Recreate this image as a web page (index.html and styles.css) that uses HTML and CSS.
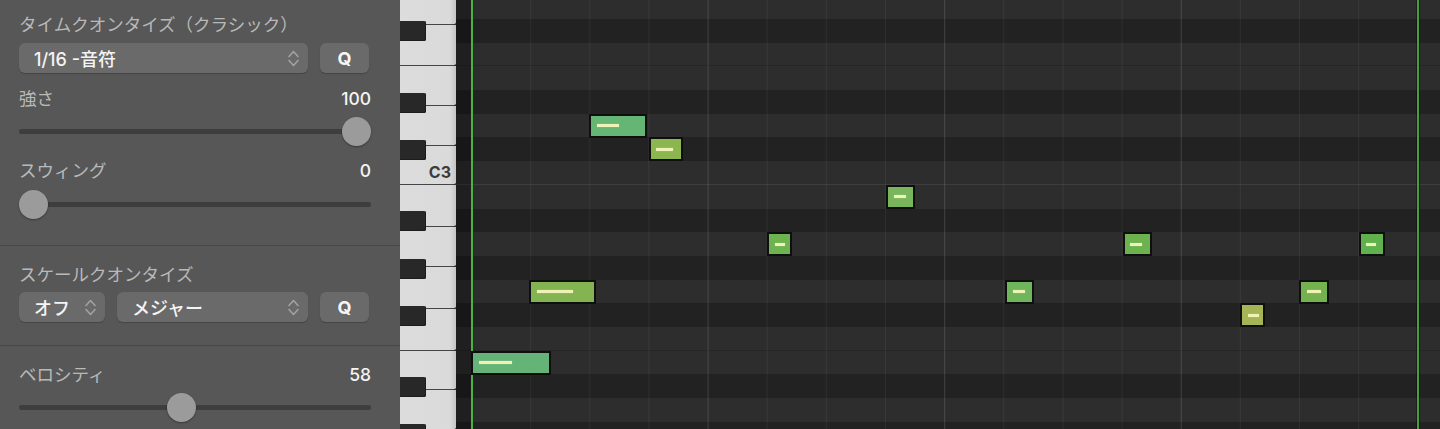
FILE: index.html
```html
<!DOCTYPE html>
<html lang="ja">
<head>
<meta charset="utf-8">
<title>Piano Roll</title>
<link rel="stylesheet" href="styles.css">
</head>
<body>
<div class="app">
  <aside class="panel">
    <section class="sec sec-time">
      <div class="label">タイムクオンタイズ（クラシック）</div>
      <div class="ctrl-row">
        <div class="popup popup-grow"><span>1/16 -音符</span>
          <svg class="chev" viewBox="0 0 11 17" width="11" height="17"><polyline points="1,6.5 5.5,1.5 10,6.5"/><polyline points="1,10.5 5.5,15.5 10,10.5"/></svg>
        </div>
        <div class="qbtn">Q</div>
      </div>
      <div class="param p-strength"><span class="label">強さ</span><span class="value">100</span></div>
      <div class="slider s-first"><div class="track"></div><div class="knob" style="left: calc((100% - 29px) * 1)"></div></div>
      <div class="param p-swing"><span class="label">スウィング</span><span class="value">0</span></div>
      <div class="slider s-second"><div class="track"></div><div class="knob" style="left: calc((100% - 29px) * 0)"></div></div>
    </section>
    <div class="divider"></div>
    <section class="sec sec-scale">
      <div class="label">スケールクオンタイズ</div>
      <div class="ctrl-row">
        <div class="popup popup-off"><span>オフ</span>
          <svg class="chev" viewBox="0 0 11 17" width="11" height="17"><polyline points="1,6.5 5.5,1.5 10,6.5"/><polyline points="1,10.5 5.5,15.5 10,10.5"/></svg>
        </div>
        <div class="popup popup-grow"><span>メジャー</span>
          <svg class="chev" viewBox="0 0 11 17" width="11" height="17"><polyline points="1,6.5 5.5,1.5 10,6.5"/><polyline points="1,10.5 5.5,15.5 10,10.5"/></svg>
        </div>
        <div class="qbtn">Q</div>
      </div>
    </section>
    <div class="divider"></div>
    <section class="sec sec-vel">
      <div class="param"><span class="label">ベロシティ</span><span class="value">58</span></div>
      <div class="slider s-vel"><div class="track"></div><div class="knob" style="left: calc((100% - 29px) * 0.4567)"></div></div>
    </section>
  </aside>

  <div class="piano">
    <div class="whites">
      <div class="wk k-g"></div>
      <div class="wk k-f"></div>
      <div class="wk k-e"></div>
      <div class="wk k-d"></div>
      <div class="wk k-c"><span class="klabel">C3</span></div>
      <div class="wk k-b"></div>
      <div class="wk k-a"></div>
      <div class="wk k-g"></div>
      <div class="wk k-f"></div>
      <div class="wk k-e"></div>
      <div class="wk k-d"></div>
      <div class="wk k-c"></div>
    </div>
    <div class="bk" style="top: 21px"></div>
    <div class="bk" style="top: 92.6px"></div>
    <div class="bk" style="top: 140px"></div>
    <div class="bk" style="top: 211px"></div>
    <div class="bk" style="top: 258.5px"></div>
    <div class="bk" style="top: 306px"></div>
    <div class="bk" style="top: 377px"></div>
    <div class="bk" style="top: 424.4px"></div>
  </div>

  <div class="grid">
    <div class="rows">
      <div class="r l"></div>
      <div class="r d"></div>
      <div class="r l f"></div>
      <div class="r l"></div>
      <div class="r d"></div>
      <div class="r l"></div>
      <div class="r d"></div>
      <div class="r l c"></div>
      <div class="r l"></div>
      <div class="r d"></div>
      <div class="r l"></div>
      <div class="r d"></div>
      <div class="r l"></div>
      <div class="r d"></div>
      <div class="r l f"></div>
      <div class="r l"></div>
      <div class="r d"></div>
      <div class="r l"></div>
      <div class="r d"></div>
    </div>
    <div class="vlines"></div>
    <div class="prestart"></div>
    <div class="marker m-start"></div>
    <div class="marker m-end"></div>

    <div class="note" style="left:133px; top:113.5px; width:57.5px; background:#65b574"><i style="width:22px"></i></div>
    <div class="note" style="left:192.5px; top:137.3px; width:34.5px; background:#8cb650"><i style="width:17px"></i></div>
    <div class="note" style="left:430px; top:184.8px; width:29px; background:#78b55c"><i style="width:12px"></i></div>
    <div class="note" style="left:311px; top:232.2px; width:25px; background:#6db350"><i style="width:10px"></i></div>
    <div class="note" style="left:666.5px; top:232.2px; width:29.5px; background:#6cb24f"><i style="width:12px"></i></div>
    <div class="note" style="left:902.5px; top:232.2px; width:26px; background:#5eb14c"><i style="width:10px"></i></div>
    <div class="note" style="left:73px; top:279.6px; width:67px; background:#84b452"><i style="width:36px"></i></div>
    <div class="note" style="left:549px; top:279.6px; width:29px; background:#6eb55b"><i style="width:12px"></i></div>
    <div class="note" style="left:843px; top:279.6px; width:30px; background:#74b24f"><i style="width:14px"></i></div>
    <div class="note" style="left:784px; top:303.3px; width:24.5px; background:#a5b455"><i style="width:11px"></i></div>
    <div class="note" style="left:15px; top:350.7px; width:80px; background:#66b378"><i style="width:33px"></i></div>
  </div>
</div>
</body>
</html>
```

FILE: styles.css
```css
* { box-sizing: border-box; }
html, body {
  margin: 0;
  padding: 0;
  width: 1440px;
  height: 429px;
  overflow: hidden;
  background: #575757;
}
.app {
  display: flex;
  height: 429px;
  font-family: "Inter", "Noto Sans CJK JP", sans-serif;
}

/* ---------- left panel ---------- */
.panel {
  width: 400px;
  flex: none;
  background: #575757;
  display: flex;
  flex-direction: column;
}
.sec {
  padding: 0 29px 0 19px;
  display: flex;
  flex-direction: column;
}
.sec-time { padding-top: 15px; height: 245px; }
.sec-scale { padding-top: 19px; height: 99px; }
.sec-vel { padding-top: 19px; flex: 1; }
.divider { height: 1px; background: #474747; flex: none; }

.label {
  color: #b9b9b9;
  font-size: 17.5px;
  line-height: 20px;
  height: 20px;
  white-space: nowrap;
}
.ctrl-row {
  display: flex;
  gap: 12px;
  margin-top: 7px;
  padding-right: 2px;
  height: 30px;
}
.sec-time .ctrl-row { margin-top: 8px; }
.popup {
  height: 30px;
  border-radius: 6px;
  background: #6a6a6a;
  box-shadow: 0 1px 1px rgba(0,0,0,0.22);
  display: flex;
  align-items: center;
  justify-content: space-between;
  padding: 0 9px 0 15px;
  color: #f4f4f4;
  font-size: 18px;
  font-weight: 500;
}
.popup-grow { flex: 1; }
.popup-off { width: 86px; flex: none; }
.chev {
  fill: none;
  stroke: #a2a2a2;
  stroke-width: 1.6;
  stroke-linecap: round;
  stroke-linejoin: round;
}
.qbtn {
  width: 49px;
  flex: none;
  height: 30px;
  border-radius: 6px;
  background: #6a6a6a;
  box-shadow: 0 1px 1px rgba(0,0,0,0.22);
  display: flex;
  align-items: center;
  justify-content: center;
  color: #f6f6f6;
  font-size: 18px;
  font-weight: 700;
}
.param {
  display: flex;
  justify-content: space-between;
  align-items: center;
  height: 20px;
}
.p-strength { margin-top: 16px; }
.p-swing { margin-top: 15px; }
.value {
  color: #f4f4f4;
  font-size: 17.5px;
  font-weight: 500;
  line-height: 20px;
}
.slider {
  position: relative;
  height: 29px;
  display: flex;
  align-items: center;
}
.s-first { margin-top: 8px; }
.s-second { margin-top: 9px; }
.s-vel { margin-top: 8px; }
.track {
  width: 100%;
  height: 5px;
  border-radius: 3px;
  background: #3e3e3e;
}
.knob {
  position: absolute;
  top: 0;
  width: 29px;
  height: 29px;
  border-radius: 50%;
  background: #9b9b9b;
  box-shadow: 0 1px 2px rgba(0,0,0,0.35);
}

/* ---------- piano ---------- */
.piano {
  width: 56px;
  flex: none;
  position: relative;
  overflow: hidden;
  background: #dadada;
}
.whites {
  display: flex;
  flex-direction: column;
  margin-top: -17.4px;
}
.wk {
  position: relative;
  flex: none;
  border-bottom: 1px solid #454545;
  background: linear-gradient(to right, #dcdcdc 0, #dadada 50px, #c4c4c4 56px);
  display: flex;
  align-items: flex-end;
  justify-content: flex-end;
}
.wk::after {
  content: "";
  position: absolute;
  right: 0;
  bottom: -3px;
  border-style: solid;
  border-width: 2.5px 3px 2.5px 0;
  border-color: transparent #333 transparent transparent;
}
.k-g { height: 42.5px; }
.k-f { height: 41.3px; }
.k-e { height: 39.5px; }
.k-d { height: 40px; }
.k-c { height: 39px; }
.k-b { height: 42px; }
.k-a { height: 40px; }
.klabel {
  font-family: "Inter", "Liberation Sans", sans-serif;
  font-weight: 700;
  font-size: 16px;
  line-height: 16px;
  color: #3b3b3b;
  padding: 0 5px 4px 0;
}
.bk {
  position: absolute;
  left: 0;
  width: 26px;
  height: 20px;
  background: #282828;
  border-radius: 0 2px 2px 0;
  box-shadow: inset -1px -1px 0 #1c1c1c;
}

/* ---------- grid ---------- */
.grid {
  flex: 1;
  position: relative;
  overflow: hidden;
  background: #222;
}
.rows {
  display: flex;
  flex-direction: column;
  margin-top: -4.7px;
}
.r { height: 23.69px; flex: none; }
.r.l { background: #2d2d2d; }
.r.d { background: #222222; }
.r.f { border-bottom: 1px solid #262626; }
.r.c { border-bottom: 1px solid #3d3d3d; }
.vlines {
  position: absolute;
  top: 0;
  bottom: 0;
  left: 15px;
  right: 0;
  background-image:
    linear-gradient(to right, rgba(255,255,255,0.085) 1px, transparent 1px),
    linear-gradient(to right, rgba(255,255,255,0.055) 1px, transparent 1px);
  background-size: 236.6px 100%, 59.15px 100%;
}
.prestart {
  position: absolute;
  top: 0;
  bottom: 0;
  left: 0;
  width: 15px;
  background: rgba(0,0,0,0.3);
}
.marker {
  position: absolute;
  top: 0;
  bottom: 0;
  width: 2px;
}
.m-start { left: 15px; background: #4cb244; }
.m-end { left: 961px; background: #43a03b; box-shadow: 0 0 0 1px rgba(0,0,0,0.35); }
.note {
  position: absolute;
  height: 24px;
  border: 2px solid #0f0f0f;
  display: flex;
  align-items: center;
  padding-left: 5.5px;
}
.note i {
  display: block;
  height: 3px;
  background: #eef2b6;
  box-shadow: 0 0 1px rgba(255,255,220,0.6);
}
```
